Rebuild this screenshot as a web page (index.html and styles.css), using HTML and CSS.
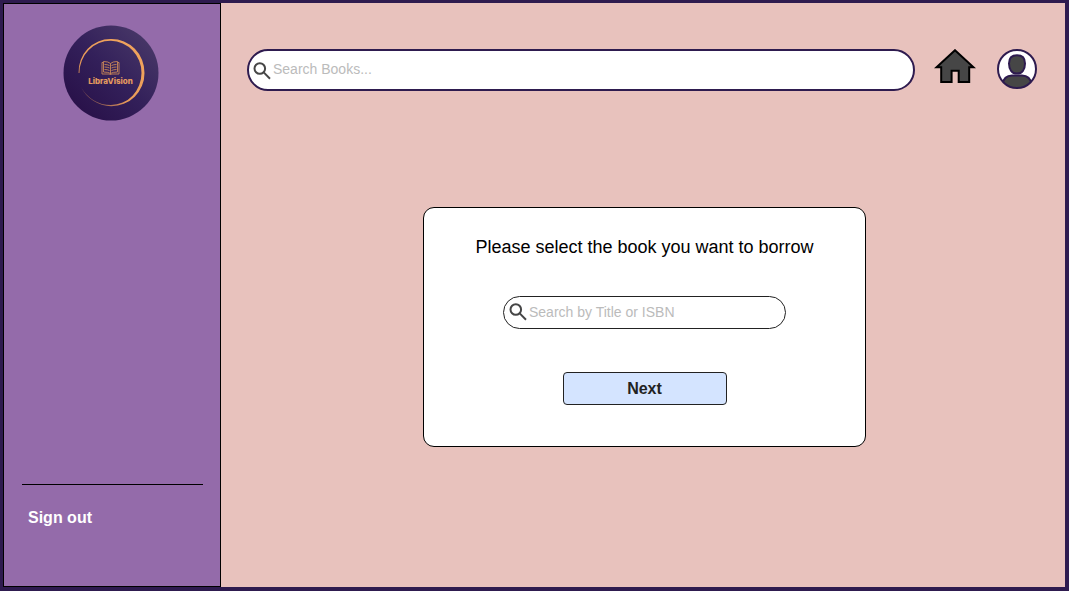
FILE: index.html
```
<!DOCTYPE html>
<html lang="en">
<head>
<meta charset="utf-8">
<meta name="viewport" content="width=device-width, initial-scale=1">
<title>LibraVision</title>
<link rel="stylesheet" href="styles.css">
</head>
<body>
<div class="app">
  <aside class="sidebar">
    <svg class="logo" viewBox="0 0 96 96" role="img" aria-label="LibraVision">
      <defs>
        <linearGradient id="disc" x1="0.1" y1="0.9" x2="0.9" y2="0.1">
          <stop offset="0" stop-color="#281048"/>
          <stop offset="0.5" stop-color="#33205a"/>
          <stop offset="1" stop-color="#483868"/>
        </linearGradient>
        <linearGradient id="gold" x1="0" y1="1" x2="0.7" y2="0.2">
          <stop offset="0" stop-color="#e89a58" stop-opacity="0.2"/>
          <stop offset="0.5" stop-color="#e89a58"/>
          <stop offset="1" stop-color="#f0a35c"/>
        </linearGradient>
      </defs>
      <circle cx="48" cy="48" r="47.500" fill="url(#disc)"/>
      <path d="M15.500 48A32 33 0 0 1 48 14A33 33.500 0 0 1 81.500 48A33 33 0 0 1 48 81.200A34 34 0 0 1 18 62A34 34 0 0 0 48 80A30.500 32 0 0 0 78.500 48A31 32 0 0 0 48 15.800A31 32 0 0 0 16.500 48Z" fill="url(#gold)"/>
      <g fill="none" stroke="#c98758" stroke-width="0.9">
        <path d="M40 37.500h-1v11.500h7.500l1 1l1-1h7.500v-11.500h-1M47.500 38.500v11M40.500 36.500q5 0 7 2q2-2 7-2v10.500q-5 0-7 1.500q-2-1.500-7-1.500z"/>
        <path d="M41.500 39.500q3 0 5 1M41.500 42q3 0 5 1M41.500 44.500q3 0 5 1M53.500 39.500q-3 0-5 1M53.500 42q-3 0-5 1M53.500 44.500q-3 0-5 1"/>
      </g>
      <text x="47.500" y="58.500" text-anchor="middle" class="logo-name">LibraVision</text>
    </svg>
    <div class="sidebar-foot">
      <a class="sign-out" href="#">Sign out</a>
    </div>
  </aside>
  <main class="main">
    <header class="topbar">
      <label class="search search-main">
        <svg class="lens" viewBox="0 0 18 18" aria-hidden="true"><circle cx="6.800" cy="6.500" r="5.300"/><path d="M10.700 10.400L17 16.700"/></svg>
        <input type="search" placeholder="Search Books..." aria-label="Search Books">
      </label>
      <a class="home" href="#" aria-label="Home">
        <svg viewBox="0 0 42 35"><path d="M21 1.200L39.500 18.200H35.200V33H24.700V21.700H17.600V33H7.200V18.200H2.500Z" fill="#464646" stroke="#000" stroke-width="2"/></svg>
      </a>
      <button class="profile" type="button" aria-label="Profile">
        <svg viewBox="0 0 40 40">
          <defs><clipPath id="face"><circle cx="20" cy="20" r="19"/></clipPath></defs>
          <circle cx="20" cy="20" r="19" fill="#fff"/>
          <g fill="#464646" stroke="#2e1b4f" stroke-width="2" clip-path="url(#face)">
            <path d="M20 6.300C25.500 6.300 28 9 28 14.500C28 20.500 25 24.600 20 24.600S12 20.500 12 14.500C12 9 14.500 6.300 20 6.300Z"/>
            <path d="M5 36C6.500 28.500 10 26.500 15 26.500H25C30 26.500 33.500 28.500 35 36V40H5Z"/>
          </g>
          <circle cx="20" cy="20" r="19" fill="none" stroke="#2e1b4f" stroke-width="2"/>
        </svg>
      </button>
    </header>
    <form class="card">
      <h1 class="card-title">Please select the book you want to borrow</h1>
      <label class="search search-book">
        <svg class="lens" viewBox="0 0 18 18" aria-hidden="true"><circle cx="6.800" cy="6.500" r="5.300"/><path d="M10.700 10.400L17 16.700"/></svg>
        <input type="search" placeholder="Search by Title or ISBN" aria-label="Search by Title or ISBN">
      </label>
      <button class="next" type="button">Next</button>
    </form>
  </main>
</div>
</body>
</html>
```
FILE: styles.css
```
* {
  box-sizing: border-box;
}

body {
  margin: 0;
  background: #fff;
  font-family: "Liberation Sans", Arial, sans-serif;
}

.app {
  display: flex;
  min-height: calc(100vh - 2px);
  border: solid #2e1b4f;
  border-width: 3px 4px 4px 3px;
  background: #e8c2bd;
}

.sidebar {
  display: flex;
  flex-direction: column;
  flex: 0 0 218px;
  padding: 21px 17px 58px 18px;
  border: 1px solid #000;
  background: #946baa;
}

.logo {
  width: 96px;
  height: 96px;
  margin-left: 41px;
}

.logo-name {
  font-family: Inter, "Liberation Sans", sans-serif;
  font-size: 8px;
  font-weight: 800;
  fill: #e39a5f;
}

.sidebar-foot {
  margin-top: auto;
  padding: 23px 6px 0;
  border-top: 1px solid #000;
}

.sign-out {
  color: #fff;
  font-size: 16px;
  font-weight: bold;
  line-height: 20px;
  text-decoration: none;
}

.main {
  flex: 1;
  padding: 46px 23px 40px 26px;
}

.topbar {
  display: flex;
  align-items: flex-start;
  padding-right: 5px;
}

.search {
  display: flex;
  align-items: center;
  background: #fff;
}

.search input {
  flex: 1;
  min-width: 0;
  padding: 0;
  border: 0;
  outline: 0;
  background: none;
  color: #222;
  font: 14px/20px "Liberation Sans", Arial, sans-serif;
}

.search input::placeholder {
  color: #bbb;
  opacity: 1;
}

.lens {
  flex: none;
  width: 18px;
  height: 18px;
  margin-right: 2px;
  fill: none;
  stroke: #464646;
  stroke-width: 2;
}

.search-main {
  flex: 1;
  height: 42px;
  padding: 0 20px 2px 4px;
  border: 2px solid #2e1b4f;
  border-radius: 21px;
}

.search-main .lens {
  margin-top: 3px;
}

.home {
  width: 42px;
  height: 35px;
  margin: 0 21px 0 19px;
}

.home svg,
.profile svg {
  display: block;
  width: 100%;
  height: 100%;
}

.profile {
  width: 40px;
  height: 40px;
  padding: 0;
  border: 0;
  border-radius: 50%;
  background: none;
}

.card {
  display: flex;
  flex-direction: column;
  align-items: center;
  width: 443px;
  max-width: 100%;
  margin: 116px auto 0;
  padding: 28px 20px 41px;
  border: 1px solid #000;
  border-radius: 11px;
  background: #fff;
}

.card-title {
  margin: 0 0 38px;
  color: #000;
  font-size: 18px;
  font-weight: normal;
  line-height: 22px;
}

.search-book {
  width: 283px;
  height: 33px;
  margin-bottom: 43px;
  padding: 0 16px 1px 5px;
  border: 1px solid #222;
  border-radius: 17px;
}

.next {
  width: 164px;
  height: 33px;
  padding: 0;
  border: 1px solid #222;
  border-radius: 4px;
  background: #d4e4ff;
  color: #222;
  font: bold 16px/20px "Liberation Sans", Arial, sans-serif;
}
```
